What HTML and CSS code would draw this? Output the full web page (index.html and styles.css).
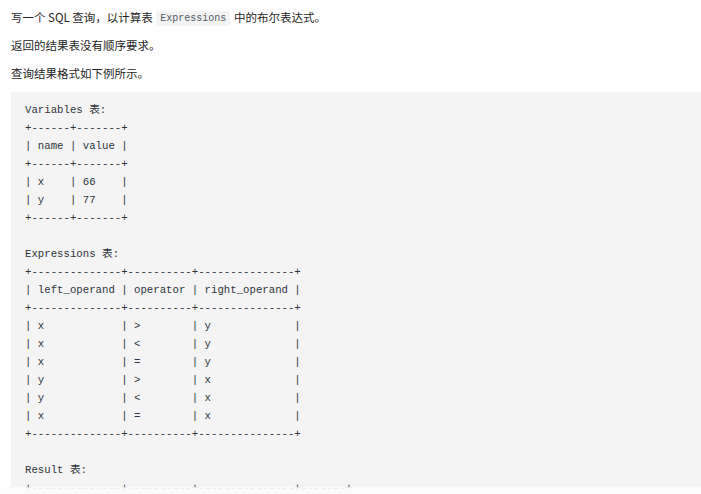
FILE: index.html
```html
<!DOCTYPE html>
<html lang="zh-CN">
<head>
<meta charset="utf-8">
<title>SQL 查询</title>
<link rel="stylesheet" href="styles.css">
</head>
<body>
<div class="content">
<p class="para">写一个 SQL 查询，以计算表 <code class="inline-code">Expressions</code> 中的布尔表达式。</p>
<p class="para">返回的结果表没有顺序要求。</p>
<p class="para">查询结果格式如下例所示。</p>
<pre class="code-block">Variables 表:
+------+-------+
| name | value |
+------+-------+
| x    | 66    |
| y    | 77    |
+------+-------+

Expressions 表:
+--------------+----------+---------------+
| left_operand | operator | right_operand |
+--------------+----------+---------------+
| x            | &gt;        | y             |
| x            | &lt;        | y             |
| x            | =        | y             |
| y            | &gt;        | x             |
| y            | &lt;        | x             |
| x            | =        | x             |
+--------------+----------+---------------+

Result 表:
+--------------+----------+---------------+-------+
| left_operand | operator | right_operand | value |
+--------------+----------+---------------+-------+
</pre>
</div>
<div class="bottom-strip"></div>
</body>
</html>
```

FILE: styles.css
```css
html, body {
  margin: 0;
  padding: 0;
  background: #ffffff;
  overflow: hidden;
}

body {
  font-family: "Noto Sans CJK SC", "Noto Sans", sans-serif;
  font-size: 11.5px;
  color: #262626;
}

.content {
  padding: 7px 0 0 11px;
}

.para {
  margin: 0 0 8px 0;
  height: 20px;
  line-height: 20px;
  white-space: nowrap;
}

.inline-code {
  font-family: "Liberation Mono", "Noto Sans CJK SC", monospace;
  font-size: 10px;
  line-height: 14px;
  background: #f3f3f3;
  color: #555b63;
  border-radius: 3px;
  padding: 2px 4px;
  margin: 0 1px;
  vertical-align: 1px;
}

.code-block {
  margin: 9px 0 0 0;
  padding: 9px 14px;
  background: #f4f4f4;
  font-family: "Liberation Mono", "Noto Sans CJK SC", monospace;
  font-size: 10.7px;
  line-height: 18px;
  color: #2f353b;
  white-space: pre;
}

.bottom-strip {
  position: fixed;
  left: 0;
  right: 0;
  bottom: 0;
  height: 7px;
  background: rgba(252, 252, 252, 0.9);
}
```
